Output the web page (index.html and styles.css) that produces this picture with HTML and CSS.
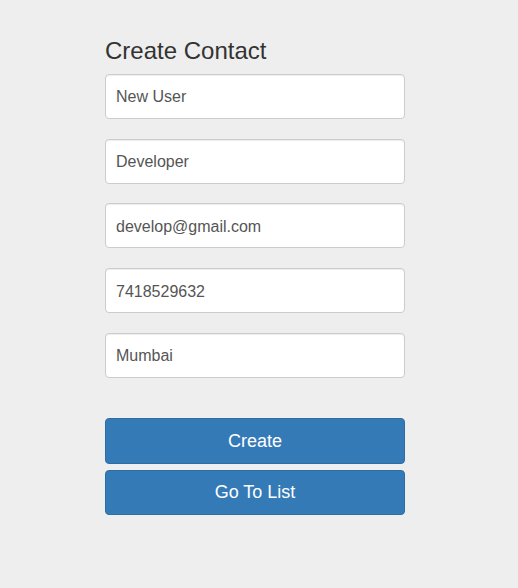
FILE: index.html
```html
<!DOCTYPE html>
<html>
<head>
<meta charset="utf-8">
<link rel="stylesheet" href="styles.css">
</head>
<body>
<div class="page">
  <form class="contact-form">
    <h3 class="title">Create Contact</h3>
    <div class="fields">
      <input class="field" type="text" value="New User">
      <input class="field" type="text" value="Developer">
      <input class="field" type="text" value="develop@gmail.com">
      <input class="field" type="text" value="7418529632">
      <input class="field" type="text" value="Mumbai">
    </div>
    <div class="actions">
      <button type="button" class="btn">Create</button>
      <button type="button" class="btn">Go To List</button>
    </div>
  </form>
</div>
</body>
</html>
```
FILE: styles.css
```css
html, body {
  margin: 0;
  padding: 0;
  background: #eeeeee;
  font-family: "Liberation Sans", Arial, sans-serif;
}
.page {
  display: flex;
  padding-top: 37.5px;
  padding-left: 105px;
}
.contact-form {
  width: 300px;
  display: flex;
  flex-direction: column;
}
.title {
  margin: 0 0 10px 0;
  font-size: 24px;
  line-height: 1.1;
  font-weight: 500;
  color: #333333;
}
.fields {
  display: flex;
  flex-direction: column;
  gap: 19.75px;
}
.field {
  box-sizing: border-box;
  width: 300px;
  height: 45px;
  margin: 0;
  padding: 2px 10px 0 10px;
  border: 1px solid #cccccc;
  border-radius: 4px;
  background: #ffffff;
  font-family: "Liberation Sans", Arial, sans-serif;
  font-size: 16px;
  color: #555555;
  box-shadow: inset 0 1px 1px rgba(0,0,0,0.075);
  outline: none;
}
.actions {
  display: flex;
  flex-direction: column;
  gap: 6px;
  margin-top: 40.5px;
}
.btn {
  box-sizing: border-box;
  width: 300px;
  height: 45.5px;
  margin: 0;
  padding: 0;
  border: 1px solid #2e6da4;
  border-radius: 4px;
  background: #337ab7;
  color: #ffffff;
  font-family: "Liberation Sans", Arial, sans-serif;
  font-size: 18px;
  cursor: pointer;
}
```
